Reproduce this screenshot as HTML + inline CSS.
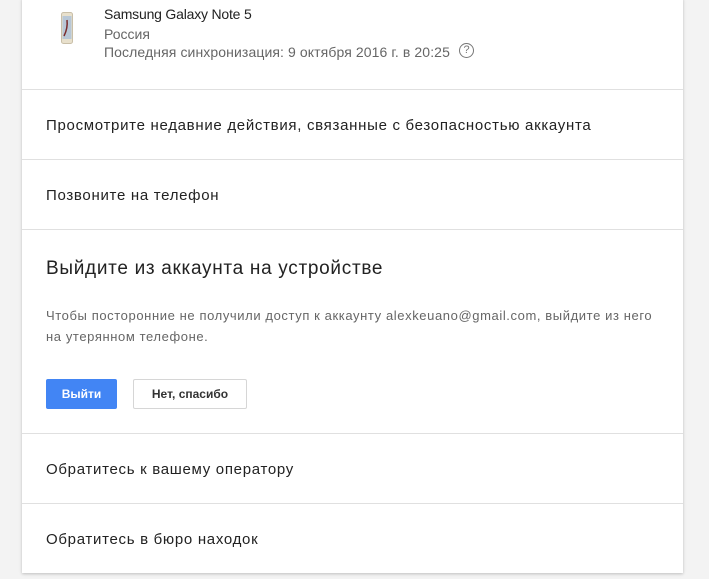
<!DOCTYPE html>
<html><head><meta charset="utf-8"><style>
body{margin:0;width:709px;height:579px;background:#f3f3f3;font-family:"Liberation Sans",sans-serif;position:relative;overflow:hidden}
.card{position:absolute;left:22px;top:-2px;width:661px;height:575px;background:#fff;box-shadow:0 1px 3px rgba(0,0,0,.22)}
.t{position:absolute;white-space:nowrap;color:#222}
.hr{position:absolute;left:0;width:661px;height:1px;background:#e0e0e0}
.g{color:#666}
</style></head><body>
<div class="card">
 <svg style="position:absolute;left:39px;top:14px" width="12" height="32" viewBox="0 0 12 32"><rect x="0.5" y="0.5" width="11" height="31" rx="2" fill="#e8e0cc" stroke="#c9bfa8"/><rect x="1.5" y="4" width="9" height="23" fill="#b8c7d6"/><path d="M3 24 Q7 16 6 8" stroke="#7a2a2a" stroke-width="1.5" fill="none"/></svg>
 <div class="t" style="left:82px;top:8px;font-size:14px;letter-spacing:-0.2px">Samsung Galaxy Note 5</div>
 <div class="t g" style="left:82px;top:28px;font-size:14px">Россия</div>
 <div class="t g" style="left:82px;top:46px;font-size:14px;letter-spacing:0.1px">Последняя синхронизация: 9 октября 2016 г. в 20:25</div>
 <div style="position:absolute;left:437px;top:45px;width:13px;height:13px;border:1.3px solid #777;border-radius:50%;font-size:11px;line-height:13px;text-align:center;color:#777">?</div>
 <div class="hr" style="top:91px"></div>
 <div class="t" style="left:24px;top:119px;font-size:15px;letter-spacing:0.7px">Просмотрите недавние действия, связанные с безопасностью аккаунта</div>
 <div class="hr" style="top:161px"></div>
 <div class="t" style="left:24px;top:189px;font-size:15px;letter-spacing:0.7px">Позвоните на телефон</div>
 <div class="hr" style="top:231px"></div>
 <div class="t" style="left:24px;top:260px;font-size:19px;letter-spacing:0.7px">Выйдите из аккаунта на устройстве</div>
 <div class="t g" style="left:24px;top:307px;font-size:13px;letter-spacing:0.6px;line-height:21px">Чтобы посторонние не получили доступ к аккаунту alexkeuano@gmail.com, выйдите из него<br>на утерянном телефоне.</div>
 <div style="position:absolute;left:24px;top:381px;width:71px;height:30px;background:#4285f4;border-radius:2px;color:#fff;font-size:12px;font-weight:bold;line-height:30px;text-align:center">Выйти</div>
 <div style="position:absolute;left:111px;top:381px;width:112px;height:28px;border:1px solid #d6d6d6;border-radius:2px;color:#333;font-size:12px;font-weight:bold;line-height:28px;text-align:center">Нет, спасибо</div>
 <div class="hr" style="top:435px"></div>
 <div class="t" style="left:24px;top:463px;font-size:15px;letter-spacing:0.7px">Обратитесь к вашему оператору</div>
 <div class="hr" style="top:505px"></div>
 <div class="t" style="left:24px;top:533px;font-size:15px;letter-spacing:0.7px">Обратитесь в бюро находок</div>
</div>
</body></html>
